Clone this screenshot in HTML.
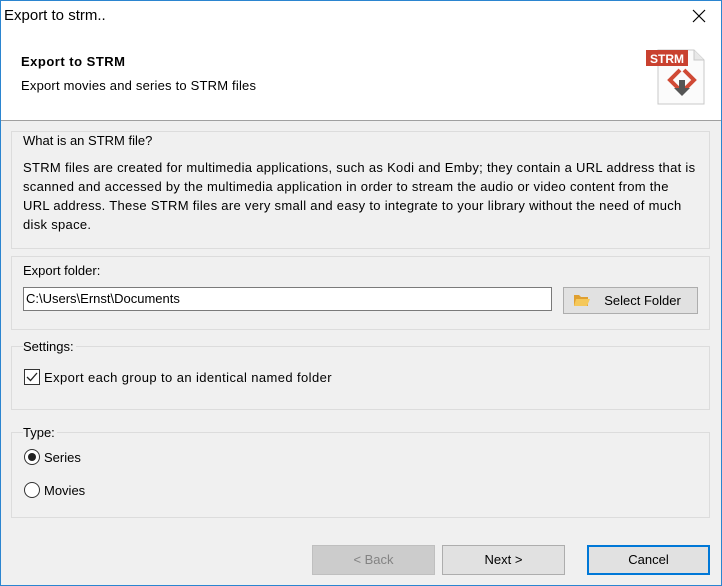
<!DOCTYPE html>
<html><head><style>
*{box-sizing:border-box;margin:0;padding:0}
body{width:722px;height:586px;background:#f0f0f0;font-family:"Liberation Sans",sans-serif;font-size:13px;color:#000;position:relative;overflow:hidden}
.win{position:absolute;left:0;top:0;width:722px;height:586px;border:1px solid #2b85d0}
.abs{position:absolute;white-space:nowrap}
.top{position:absolute;left:1px;top:1px;width:720px;height:120px;background:#fff;border-bottom:1px solid #a0a0a0}
.grp{position:absolute;left:11px;width:699px;border:1px solid #dcdcdc}
.btn{position:absolute;height:30px;border:1px solid #adadad;background:#e1e1e1;text-align:center;line-height:28px;font-size:13px}
</style></head><body>
<div class="win"></div>
<div class="top"></div>
<div class="abs" style="left:4px;top:7px;font-size:15px">Export to strm..</div>
<svg class="abs" style="left:692px;top:9px" width="14" height="14"><path d="M1 1L13 13M13 1L1 13" stroke="#000" stroke-width="1.2"/></svg>
<div class="abs" style="left:21px;top:54px;font-weight:bold;font-size:13px;letter-spacing:0.5px">Export to STRM</div>
<div class="abs" style="left:21px;top:78px;letter-spacing:0.2px">Export movies and series to STRM files</div>
<svg class="abs" style="left:644px;top:46px" width="64" height="62">
<path d="M14 4H50L60 14V58H14Z" fill="#fbfbfb" stroke="#c8c8c8"/>
<path d="M50 4V14H60" fill="#e8e8e8" stroke="#c8c8c8"/>
<rect x="2" y="4" width="42" height="16" fill="#c9412f"/>
<text x="23" y="17" text-anchor="middle" fill="#fff" font-family="Liberation Sans" font-weight="bold" font-size="12">STRM</text>
<path d="M36 24L26 34L36 44M40 24L50 34L40 44" fill="none" stroke="#d04a35" stroke-width="4"/>
<path d="M35 34h6v8h5l-8 8l-8-8h5z" fill="#555"/>
</svg>

<div class="grp" style="top:131px;height:118px"></div>
<div class="abs" style="left:23px;top:133px">What is an STRM file?</div>
<div class="abs" style="left:23px;top:158px;line-height:19px;letter-spacing:0.3px">STRM files are created for multimedia applications, such as Kodi and Emby; they contain a URL address that is<br>scanned and accessed by the multimedia application in order to stream the audio or video content from the<br>URL address. These STRM files are very small and easy to integrate to your library without the need of much<br>disk space.</div>

<div class="grp" style="top:256px;height:74px"></div>
<div class="abs" style="left:23px;top:263px">Export folder:</div>
<div class="abs" style="left:23px;top:287px;width:529px;height:24px;background:#fff;border:1px solid #7a7a7a;padding:3px 2px">C:\Users\Ernst\Documents</div>
<div class="btn" style="left:563px;top:287px;width:135px;height:27px;line-height:25px;padding-left:24px">Select Folder</div>
<svg class="abs" style="left:573px;top:293px" width="18" height="14"><path d="M1 2h5l2 2h7v9H1z" fill="#e0a030"/><path d="M3 6h14l-3 7H1z" fill="#f5c85a"/></svg>

<div class="grp" style="top:346px;height:64px"></div>
<div class="abs" style="left:23px;top:339px;background:#f0f0f0;padding-right:2px">Settings:</div>
<div class="abs" style="left:24px;top:369px;width:16px;height:16px;background:#fff;border:1px solid #333"></div>
<svg class="abs" style="left:25px;top:370px" width="14" height="14"><path d="M2 7l3.5 3.5L12 3" fill="none" stroke="#222" stroke-width="1.3"/></svg>
<div class="abs" style="left:44px;top:370px;letter-spacing:0.4px">Export each group to an identical named folder</div>

<div class="grp" style="top:432px;height:86px"></div>
<div class="abs" style="left:23px;top:425px;background:#f0f0f0;padding-right:2px">Type:</div>
<div class="abs" style="left:24px;top:449px;width:16px;height:16px;border-radius:50%;background:#fff;border:1px solid #333"></div>
<div class="abs" style="left:28px;top:453px;width:8px;height:8px;border-radius:50%;background:#222"></div>
<div class="abs" style="left:44px;top:450px">Series</div>
<div class="abs" style="left:24px;top:482px;width:16px;height:16px;border-radius:50%;background:#fff;border:1px solid #333"></div>
<div class="abs" style="left:44px;top:483px">Movies</div>

<div class="btn" style="left:312px;top:545px;width:123px;background:#cccccc;border-color:#bfbfbf;color:#838383">&lt; Back</div>
<div class="btn" style="left:442px;top:545px;width:123px">Next &gt;</div>
<div class="btn" style="left:587px;top:545px;width:123px;border:2px solid #0078d7;line-height:26px">Cancel</div>
</body></html>
